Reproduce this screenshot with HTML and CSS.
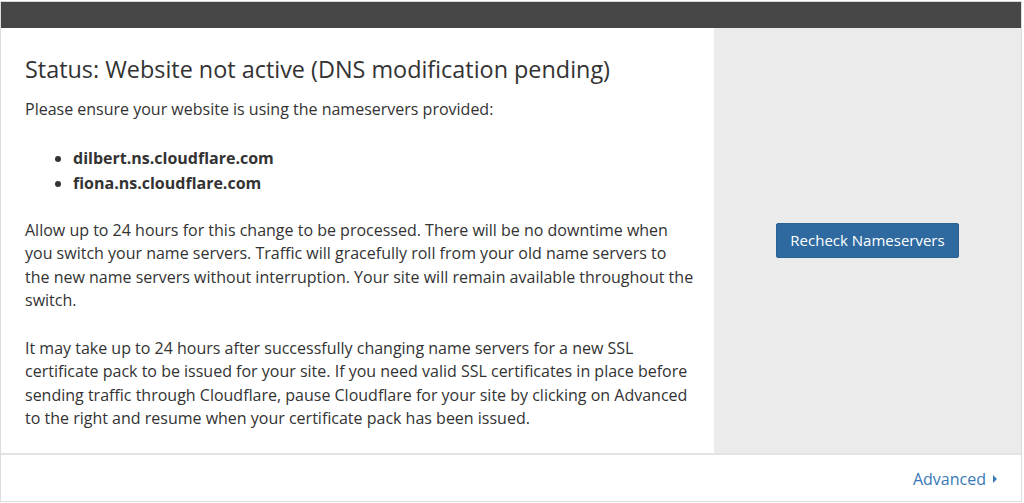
FILE: index.html
```html
<!DOCTYPE html>
<html>
<head>
<meta charset="utf-8">
<link rel="stylesheet" href="styles.css">
</head>
<body>
<div class="card">
  <div class="card-header"></div>
  <div class="card-body">
    <div class="main">
      <h2 class="title">Status: Website not active (DNS modification pending)</h2>
      <p class="text">Please ensure your website is using the nameservers provided:</p>
      <ul class="ns-list">
        <li>dilbert.ns.cloudflare.com</li>
        <li>fiona.ns.cloudflare.com</li>
      </ul>
      <p class="text">Allow up to 24 hours for this change to be processed. There will be no downtime when you switch your name servers. Traffic will gracefully roll from your old name servers to the new name servers without interruption. Your site will remain available throughout the switch.</p>
      <p class="text last">It may take up to 24 hours after successfully changing name servers for a new SSL certificate pack to be issued for your site. If you need valid SSL certificates in place before sending traffic through Cloudflare, pause Cloudflare for your site by clicking on Advanced to the right and resume when your certificate pack has been issued.</p>
    </div>
    <div class="aside">
      <button class="btn">Recheck Nameservers</button>
    </div>
  </div>
  <div class="card-footer">
    <a class="advanced" href="#">Advanced<span class="caret"></span></a>
  </div>
</div>
</body>
</html>
```

FILE: styles.css
```css
html, body {
  margin: 0;
  padding: 0;
  background: #fff;
}
body {
  font-family: "Open Sans", "DejaVu Sans", sans-serif;
  color: #333;
  padding-top: 1px;
}
.card {
  width: 1020px;
  border: 1px solid #dcdcdc;
  border-top: 0;
  background: #fff;
}
.card-header {
  height: 26px;
  background: #464646;
  border-top: 1px solid #d8d8d8;
}
.card-body {
  display: flex;
  border-bottom: 2px solid #e3e3e3;
}
.main {
  width: 669px;
  padding: 27px 20px 22px 24px;
  box-sizing: content-box;
}
.title {
  margin: 0 0 15px 0;
  font-size: 23.4px;
  font-weight: 400;
  line-height: 28px;
  color: #333;
}
.text {
  margin: 0 0 24px 0;
  font-size: 16px;
  line-height: 23.5px;
}
.text.last {
  margin-bottom: 0;
}
.ns-list {
  margin: 0 0 23px 0;
  padding-left: 48px;
  font-size: 16px;
  font-weight: 700;
  line-height: 25px;
}
.aside {
  flex: 1;
  background: #ebebeb;
  display: flex;
  align-items: center;
  justify-content: center;
}
.btn {
  font-family: "Open Sans", "DejaVu Sans", sans-serif;
  font-size: 15px;
  color: #fff;
  background: #2e6aa0;
  border: 1px solid #2a6294;
  border-radius: 2px;
  width: 183px;
  height: 35px;
  padding: 0;
  cursor: pointer;
}
.card-footer {
  height: 46px;
  display: flex;
  align-items: center;
  justify-content: flex-end;
  padding-right: 24px;
}
.advanced {
  font-size: 16px;
  color: #3a78b5;
  text-decoration: none;
  display: flex;
  align-items: center;
  margin-top: 2px;
}
.caret {
  display: inline-block;
  width: 0;
  height: 0;
  border-top: 4px solid transparent;
  border-bottom: 4px solid transparent;
  border-left: 4px solid #3a78b5;
  margin-left: 7px;
}
```
